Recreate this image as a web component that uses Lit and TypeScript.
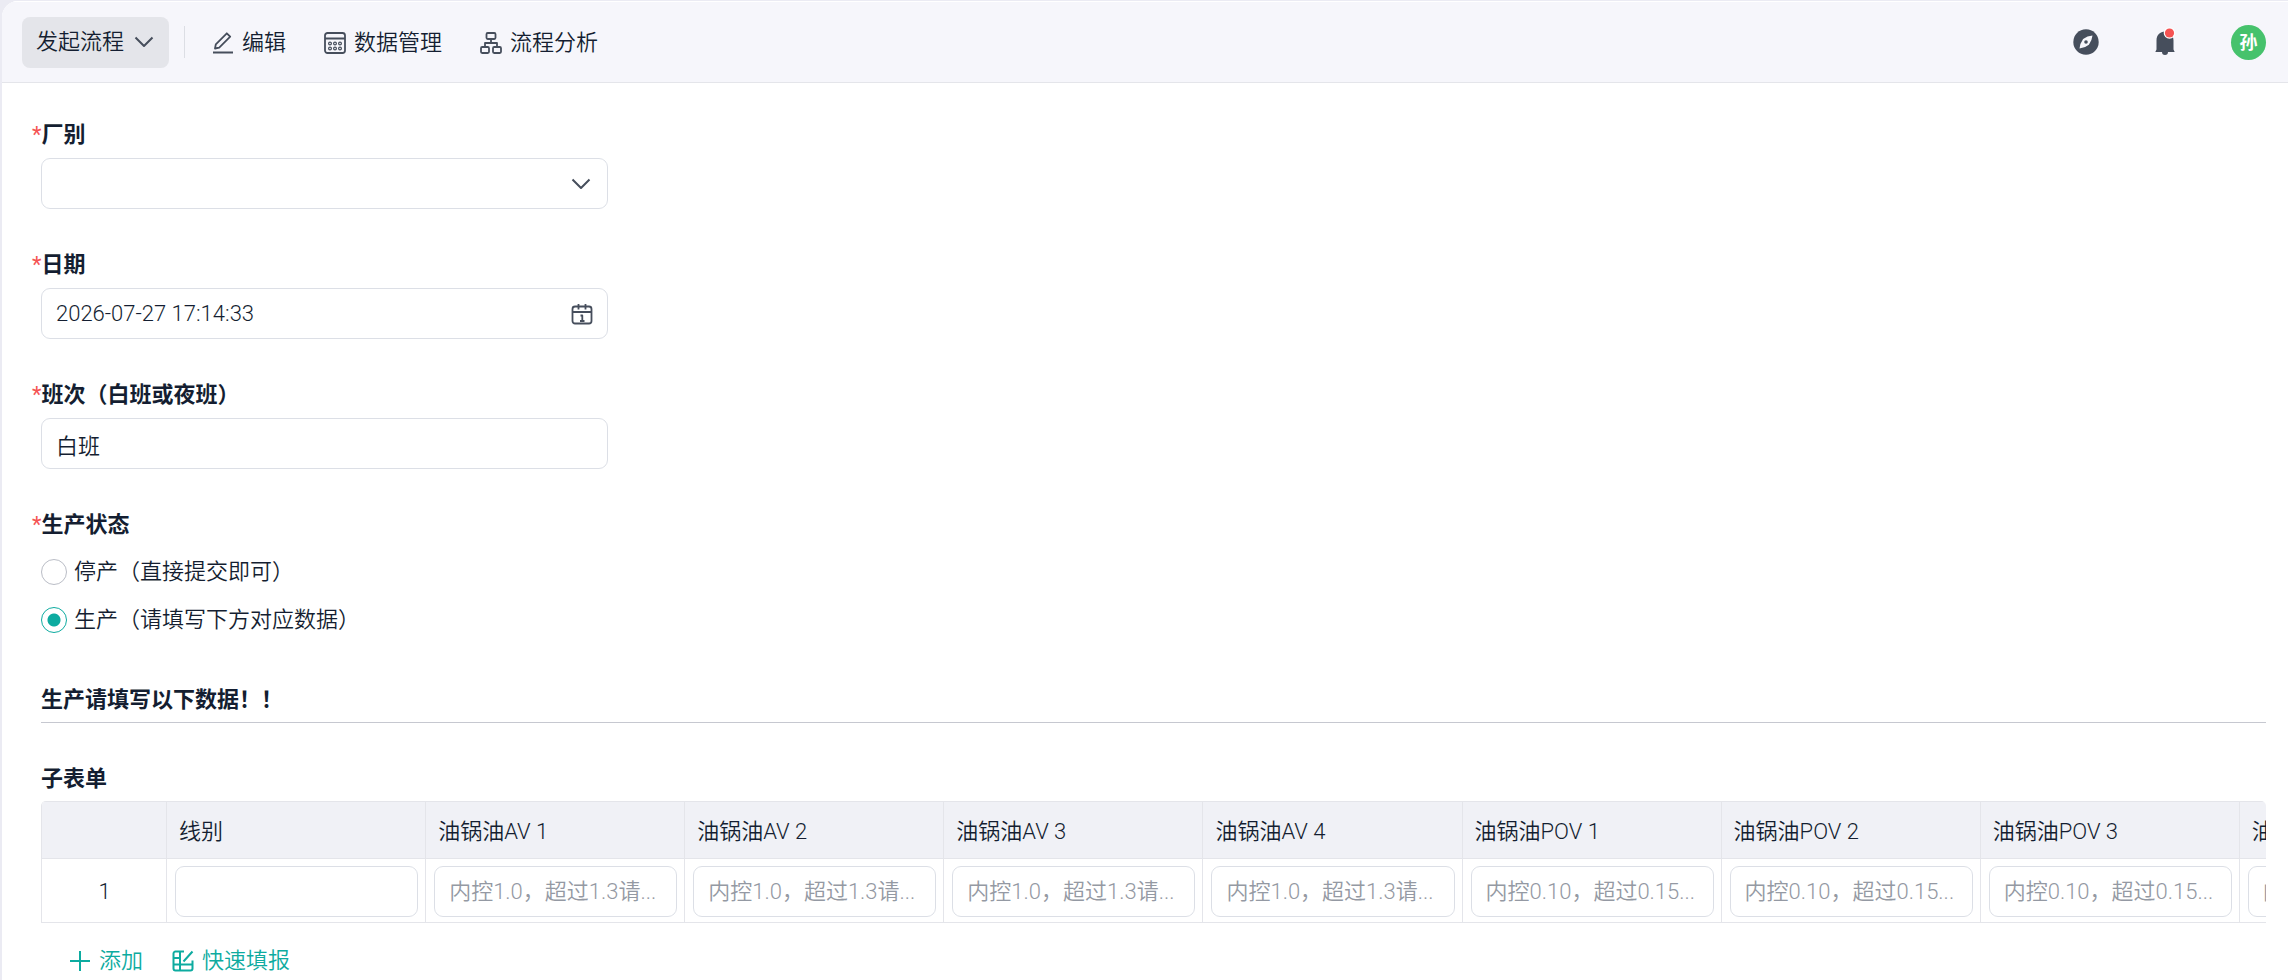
import { LitElement, html, css, svg } from "lit";
import { customElement, state } from "lit/decorators.js";

const chevron = html`<svg class="chev" width="20" height="12" viewBox="0 0 20 12" aria-hidden="true"><path d="M1.5 1.5 10 10l8.5-8.5" /></svg>`;
const pencil = html`<svg class="ico" width="22" height="22" viewBox="0 0 22 22" aria-hidden="true"><path d="M1 20.5h20M3.8 12.3 14.8 1.3l3.4 3.4L7.2 15.7l-4.2.8z" /></svg>`;
const gridIcon = html`<svg class="ico" width="22" height="22" viewBox="0 0 22 22" aria-hidden="true"><rect x="1" y="1" width="20" height="20" rx="2.5" /><path d="M1 6.5h20" />${[6, 11, 16].map((x) => svg`<circle class="dot" cx=${x} cy="11.5" r="1.4" /><circle class="dot" cx=${x} cy="16.5" r="1.4" />`)}</svg>`;
const flowIcon = html`<svg class="ico" width="22" height="22" viewBox="0 0 22 22" aria-hidden="true"><rect x="6.5" y="1" width="9" height="6" rx="1.2" /><rect x="1" y="15" width="8" height="6" rx="1.2" /><rect x="13" y="15" width="8" height="6" rx="1.2" /><path d="M11 7v4M5 15v-4h12v4" /></svg>`;
const calendar = html`<svg class="ico" width="22" height="22" viewBox="0 0 22 22" aria-hidden="true"><rect x="1.5" y="3.500" width="19" height="17" rx="2.5" /><path d="M1.5 9h19M7.500 1v5.500M14.500 1v5.500M9.500 12.500h1.800v5.500M9 18h4.500" /></svg>`;

const compass = html`<svg width="26" height="26" viewBox="0 0 26 26" aria-hidden="true"><circle cx="13" cy="13" r="12.7" fill="#464e5c" /><path d="M19.5 6.500q-.5 5-3.600 9.200-4.200 3.400-9.400 3.800.5-5 3.600-9.400 4.200-3.200 9.400-3.600z" fill="#f6f6fb" /><circle cx="13" cy="13" r="1.8" fill="#464e5c" /></svg>`;
const bell = html`<svg width="24" height="30" viewBox="0 0 24 30" aria-hidden="true"><path d="M3.5 13.500C3.500 8 7 4.500 12 4.500S20.500 8 20.500 13.500v9l1.200 2.500H15a3 3 0 0 1-6 0H2.300l1.200-2.500z" fill="#464e5c" /><circle cx="16.5" cy="6" r="5.8" fill="#fff" /><circle cx="16.5" cy="6" r="4.6" fill="#f55353" /></svg>`;
const plus = html`<svg class="act" width="22" height="22" viewBox="0 0 22 22" aria-hidden="true"><path d="M11 1v20M1 11h20" /></svg>`;
const fill = html`<svg class="act" width="22" height="22" viewBox="0 0 22 22" aria-hidden="true"><path d="M12 1.500H3.500a2 2 0 0 0-2 2v15a2 2 0 0 0 2 2h15a2 2 0 0 0 2-2V10.500M1.500 8H8M1.500 14.500h19M8 1.500v19M11.500 11.500 20.500 1.500" /></svg>`;

const AV = "内控1.0，超过1.3请...";
const POV = "内控0.10，超过0.15...";
const columns: [string, string][] = [
  ["线别", ""],
  ["油锅油AV 1", AV],
  ["油锅油AV 2", AV],
  ["油锅油AV 3", AV],
  ["油锅油AV 4", AV],
  ["油锅油POV 1", POV],
  ["油锅油POV 2", POV],
  ["油锅油POV 3", POV],
  ["油锅油POV 4", POV],
];

@customElement("app-root")
export class AppRoot extends LitElement {
  @state() private status = "run";

  static styles = css`
    :host {
      display: block;
      min-height: 100vh;
      box-sizing: border-box;
      padding: 1px 0 0 2px;
      overflow: hidden;
      background: #ebebf3;
      color: #141e31;
      font: 350 22px/32px Roboto, "Noto Sans CJK SC", sans-serif;
    }
    * { box-sizing: border-box; }
    button, input, select { font: inherit; color: inherit; }
    button { border: 0; background: none; padding: 0; cursor: pointer; white-space: nowrap; }
    svg { flex: none; display: block; }
    .chev, .ico, .act { fill: none; stroke: #464e5c; stroke-width: 2; stroke-linejoin: round; }
    .ico { stroke-width: 1.8; }
    .dot { stroke-width: 1.2; }
    .act { stroke: #0daba0; }
    .panel { background: #fff; border-radius: 16px 0 0 0; min-height: calc(100vh - 1px); overflow: hidden; }
    header {
      display: flex; align-items: center; height: 82px; padding: 0 22px 0 20px;
      background: #f6f6fb; border-top: 1px solid #fff; border-bottom: 1px solid #e4e5ea;
    }
    .start { display: flex; align-items: center; gap: 10px; height: 51px; padding: 0 15px 0 14px; border-radius: 8px; background: #e4e5ea; }
    .rule { width: 1px; height: 32px; margin: 0 27px 0 15px; background: #dcdee4; }
    nav { display: flex; gap: 38px; padding-top: 2px; }
    nav button, .actions button { display: flex; align-items: center; gap: 8px; }
    .tools { display: flex; align-items: center; margin-left: auto; gap: 54px; }
    .avatar { width: 35px; height: 35px; border-radius: 50%; background: #46c26c; color: #fff; font-size: 18px; font-weight: 700; line-height: 35px; }
    main { padding: 36px 22px 0 39px; }
    .field { max-width: 567px; margin: 0 0 40px; padding: 0; border: 0; min-width: 0; }
    .label { display: block; padding: 0; margin-bottom: 7px; font-weight: 700; line-height: 32px; }
    .req::before { content: "*"; margin-left: -9px; color: #f55353; font-weight: 400; }
    .box { position: relative; display: flex; }
    .box svg { position: absolute; right: 17px; top: 50%; translate: 0 -50%; pointer-events: none; }
    .box .ico { right: 15px; }
    .ctl {
      width: 100%; height: 51px; padding: 0 12px 0 14px; border: 1px solid #dcdfe6; border-radius: 9px;
      background: #fff; appearance: none; outline: none; text-overflow: ellipsis;
    }
    .ctl::placeholder { color: #9499a3; opacity: 1; }
    .radio { display: flex; align-items: center; gap: 7px; height: 48px; }
    .radio input {
      appearance: none; flex: none; width: 26px; height: 26px; margin: 0; border: 1px solid #babdc6; border-radius: 50%;
    }
    .radio input:checked { border-color: #0daba0; background: radial-gradient(circle, #0daba0 6px, #fff 7px); }
    h2 { margin: 0 0 40px; padding-bottom: 6px; border-bottom: 1px solid #c6c8d0; font-size: 22px; line-height: 32px; }
    .sub { margin: 0 0 6px; font-size: 22px; line-height: 32px; }
    .scroll { overflow: hidden; border-radius: 5px 5px 0 0; border-left: 1px solid #e4e5ea; }
    table { table-layout: fixed; width: 2457px; border-collapse: separate; border-spacing: 0; border-top: 1px solid #e4e5ea; }
    th, td { width: 259px; border-right: 1px solid #e4e5ea; border-bottom: 1px solid #e4e5ea; font-weight: inherit; }
    th { height: 57px; padding: 4px 12px 0; text-align: left; background: #f0f1f6; }
    td { height: 64px; padding: 2px 7px 0 8px; }
    .no { width: 125px; text-align: center; }
    .actions { display: flex; gap: 29px; padding: 22px 28px 0; color: #0daba0; }
  `;

  private option(value: string, text: string) {
    return html`<label class="radio"><input type="radio" name="status" .checked=${this.status === value} @change=${() => (this.status = value)} />${text}</label>`;
  }

  render() {
    return html`<div class="panel">
      <header>
        <button class="start">发起流程${chevron}</button>
        <span class="rule"></span>
        <nav>
          <button>${pencil}编辑</button>
          <button>${gridIcon}数据管理</button>
          <button>${flowIcon}流程分析</button>
        </nav>
        <div class="tools">
          <button aria-label="导航">${compass}</button>
          <button aria-label="通知">${bell}</button>
          <button class="avatar">孙</button>
        </div>
      </header>
      <main>
        <div class="field">
          <label class="label req" for="plant">厂别</label>
          <div class="box"><select class="ctl" id="plant"><option></option></select>${chevron}</div>
        </div>
        <div class="field">
          <label class="label req" for="date">日期</label>
          <div class="box"><input class="ctl" id="date" value="2026-07-27 17:14:33" />${calendar}</div>
        </div>
        <div class="field">
          <label class="label req" for="shift">班次（白班或夜班）</label>
          <div class="box"><input class="ctl" id="shift" value="白班" /></div>
        </div>
        <fieldset class="field">
          <legend class="label req">生产状态</legend>
          ${this.option("stop", "停产（直接提交即可）")}
          ${this.option("run", "生产（请填写下方对应数据）")}
        </fieldset>
        <h2>生产请填写以下数据！！</h2>
        <h3 class="sub">子表单</h3>
        <div class="scroll">
          <table>
            <thead><tr><th class="no"></th>${columns.map(([name]) => html`<th scope="col">${name}</th>`)}</tr></thead>
            <tbody><tr><td class="no">1</td>${columns.map(([name, hint]) => html`<td><input class="ctl" aria-label=${name} placeholder=${hint} /></td>`)}</tr></tbody>
          </table>
        </div>
        <div class="actions">
          <button>${plus}添加</button>
          <button>${fill}快速填报</button>
        </div>
      </main>
    </div>`;
  }
}
